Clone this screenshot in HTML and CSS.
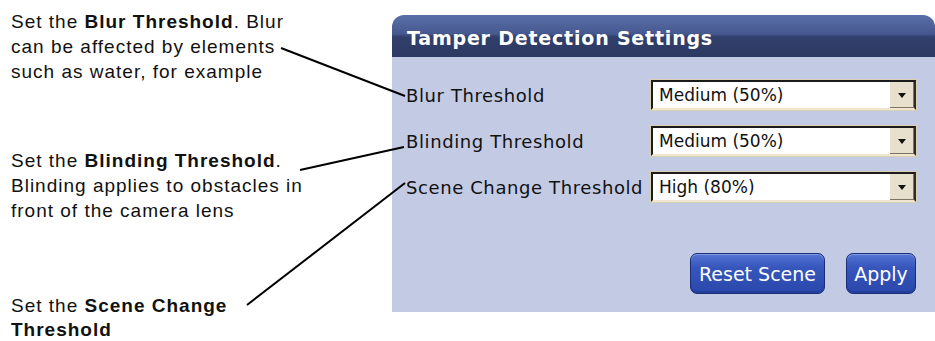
FILE: index.html
```html
<!DOCTYPE html>
<html lang="en">
<head>
  <meta charset="UTF-8" />
  <title>Tamper Detection Settings</title>
  <link rel="stylesheet" href="styles.css">
</head>
<body>
<div class="figure">
  <div class="notes">
    <p class="note">Set the <b>Blur Threshold</b>. Blur<br>can be affected by elements<br>such as water, for example</p>
    <p class="note note-blinding">Set the <b>Blinding Threshold</b>.<br>Blinding applies to obstacles in<br>front of the camera lens</p>
    <p class="note note-scene">Set the <b>Scene Change</b><br><b>Threshold</b></p>
  </div>

  <div class="panel">
    <div class="panel-head">Tamper Detection Settings</div>
    <div class="panel-body">
      <div class="fields">
        <span class="field-label">Blur Threshold</span>
        <div class="combo"><span class="combo-value">Medium (50%)</span><span class="combo-btn"></span></div>

        <span class="field-label">Blinding Threshold</span>
        <div class="combo"><span class="combo-value">Medium (50%)</span><span class="combo-btn"></span></div>

        <span class="field-label">Scene Change Threshold</span>
        <div class="combo"><span class="combo-value">High (80%)</span><span class="combo-btn"></span></div>
      </div>
      <div class="actions">
        <button class="xp-btn btn-reset">Reset Scene</button>
        <button class="xp-btn btn-apply">Apply</button>
      </div>
    </div>
  </div>

  <!-- callout lines from the notes to the labels -->
  <svg class="callouts" width="935" height="341" viewBox="0 0 935 341">
    <line x1="281" y1="48" x2="405" y2="96" />
    <line x1="300" y1="170" x2="404" y2="147" />
    <line x1="247" y1="305" x2="405" y2="183" />
  </svg>
</div>
</body>
</html>
```

FILE: styles.css
```css
body {
  margin: 0;
  background: #fff;
  font-family: "Liberation Sans", Arial, sans-serif;
}
.figure {
  position: relative;
  width: 935px;
  height: 341px;
  display: flex;
  overflow: hidden;
}
.notes {
  width: 392px;
  flex-shrink: 0;
  padding: 9px 0 0 11px;
  box-sizing: border-box;
}
.note {
  margin: 0;
  font-size: 19px;
  line-height: 25px;
  letter-spacing: 1px;
  color: #111;
}
.note-blinding {
  margin-top: 64px;
}
.note-scene {
  margin-top: 71px;
  line-height: 24px;
}
.panel {
  margin-top: 15px;
  width: 543px;
  height: 297px;
  display: flex;
  flex-direction: column;
  font-family: "DejaVu Sans", Verdana, sans-serif;
}
.panel-head {
  height: 42px;
  box-sizing: border-box;
  padding: 12px 0 0 15px;
  color: #fff;
  font-weight: bold;
  font-size: 19px;
  letter-spacing: 0.8px;
  background: linear-gradient(#5a6fa8, #45588f 45%, #313f6c 52%, #2c3962);
  border-radius: 12px 12px 0 0;
}
.panel-body {
  flex: 1;
  background: #c3cae4;
  padding: 23px 19px 0 14px;
  display: flex;
  flex-direction: column;
}
.fields {
  display: grid;
  grid-template-columns: 245px 265px;
  row-gap: 16px;
  align-items: center;
}
.field-label {
  font-size: 18px;
  letter-spacing: 0.6px;
  color: #111;
}
.combo {
  height: 30px;
  box-sizing: border-box;
  border: 2px solid;
  border-color: #1b1b1b #2b2b2b #efe6cf #1b1b1b;
  box-shadow: 0 0 0 1px #d9cfb2;
  background: #fff;
  display: flex;
  align-items: center;
}
.combo-value {
  flex: 1;
  padding-left: 6px;
  font-size: 17px;
  color: #111;
}
.combo-btn {
  position: relative;
  width: 24px;
  height: 26px;
  box-sizing: border-box;
  background: #e6e0cc;
  border-right: 1px solid #7c7564;
  border-bottom: 1px solid #7c7564;
}
.combo-btn::after {
  content: "";
  position: absolute;
  left: 8px;
  top: 11px;
  border-left: 4px solid transparent;
  border-right: 4px solid transparent;
  border-top: 5px solid #111;
}
.actions {
  margin-top: auto;
  margin-bottom: 18px;
  display: flex;
  justify-content: flex-end;
  gap: 21px;
}
.xp-btn {
  height: 41px;
  padding: 0;
  border: 1px solid #1b2c78;
  border-radius: 7px;
  background: linear-gradient(#5473d2, #3656bd 35%, #2a48aa);
  box-shadow: inset 0 1px 0 #839ce6, inset 0 -2px 0 #223f9c;
  color: #fff;
  font-family: "DejaVu Sans", Verdana, sans-serif;
  font-size: 19px;
}
.btn-reset {
  width: 135px;
}
.btn-apply {
  width: 70px;
}
.callouts {
  position: absolute;
  left: 0;
  top: 0;
  pointer-events: none;
}
.callouts line {
  stroke: #000;
  stroke-width: 2;
}
```
